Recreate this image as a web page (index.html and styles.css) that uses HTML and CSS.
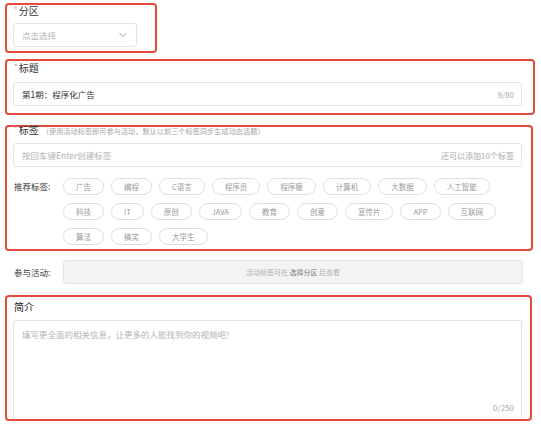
FILE: index.html
```html
<!DOCTYPE html>
<html lang="zh-CN">
<head>
<meta charset="utf-8">
<title>投稿信息</title>
<link rel="stylesheet" href="styles.css">
</head>
<body>
<div class="page">
  <section class="box box-part">
    <div class="label"><span class="req">*</span>分区</div>
    <div class="select">
      <span class="ph">点击选择</span>
      <svg class="chev" width="10" height="6" viewBox="0 0 10 6"><polyline points="1.5,1 5,4.5 8.5,1" fill="none" stroke="#a8a8a8" stroke-width="1"/></svg>
    </div>
  </section>

  <section class="box box-title">
    <div class="label"><span class="req">*</span>标题</div>
    <div class="field">
      <span class="val">第1期：程序化广告</span>
      <span class="count">9/80</span>
    </div>
  </section>

  <section class="box box-tags">
    <div class="label label-tags"><span class="req">*</span>标签<span class="note">（使用活动标签即可参与活动，默认以前三个标签同步生成动态话题）</span></div>
    <div class="field">
      <span class="ph">按回车键Enter创建标签</span>
      <span class="count">还可以添加10个标签</span>
    </div>
    <div class="rec">
      <div class="rec-label">推荐标签:</div>
      <div class="chips">
        <span class="chip">广告</span>
        <span class="chip">编程</span>
        <span class="chip">C语言</span>
        <span class="chip">程序员</span>
        <span class="chip">程序猿</span>
        <span class="chip">计算机</span>
        <span class="chip">大数据</span>
        <span class="chip">人工智能</span>
        <span class="chip">科技</span>
        <span class="chip">IT</span>
        <span class="chip">原创</span>
        <span class="chip">JAVA</span>
        <span class="chip">教育</span>
        <span class="chip">创意</span>
        <span class="chip">宣传片</span>
        <span class="chip">APP</span>
        <span class="chip">互联网</span>
        <span class="chip">算法</span>
        <span class="chip">搞笑</span>
        <span class="chip">大学生</span>
      </div>
    </div>
  </section>

  <div class="activity">
    <div class="act-label">参与活动:</div>
    <div class="act-box">活动标签可在 <span class="act-em">选择分区</span> 后查看</div>
  </div>

  <section class="box box-intro">
    <div class="label label-intro">简介</div>
    <div class="textarea">
      <span class="ph">填写更全面的相关信息，让更多的人能找到你的视频吧！</span>
      <span class="count">0/250</span>
    </div>
  </section>
</div>
</body>
</html>
```

FILE: styles.css
```css
* { box-sizing: border-box; }

body {
  margin: 0;
  background: #ffffff;
  font-family: "Noto Sans CJK SC", "Noto Sans", sans-serif;
  color: #333333;
}

.page {
  padding: 3px 0 0 5px;
}

.box {
  border: 2px solid #e24b3b;
  border-radius: 4px;
  padding: 0 6px;
}

.label {
  font-size: 10px;
  line-height: 12px;
  padding-left: 1px;
  color: #333333;
  white-space: nowrap;
}

.req {
  color: #ee7b76;
  font-size: 8px;
  vertical-align: top;
  line-height: 10px;
  margin-right: 1px;
}

.ph { color: #b3b3b3; }
.val { color: #333333; }
.count { color: #a8a8a8; }

/* 分区 */
.box-part {
  width: 152px;
  height: 50px;
}

.select {
  margin-top: 6px;
  width: 124px;
  height: 24px;
  border: 1px solid #e4e4e4;
  border-radius: 3px;
  padding: 0 8px;
  display: flex;
  align-items: center;
  justify-content: space-between;
  font-size: 8.5px;
}

.chev { display: block; }

/* 标题 */
.box-title {
  margin-top: 6px;
  width: 530px;
  height: 56px;
  padding-top: 1px;
}

.field {
  margin-top: 8px;
  width: 509px;
  height: 24px;
  border: 1px solid #e4e4e4;
  border-radius: 3px;
  padding: 0 7px 0 8px;
  display: flex;
  align-items: center;
  justify-content: space-between;
  font-size: 8.5px;
}

.field .count { font-size: 8px; }

/* 标签 */
.box-tags {
  margin-top: 10px;
  width: 528px;
  height: 126px;
}

.label-tags {
  margin-top: -3px;
}

.note {
  font-size: 7.2px;
  color: #a6a6a6;
  margin-left: 3px;
}

.box-tags .field { margin-top: 6px; }

.rec {
  margin-top: 11px;
  display: flex;
  align-items: flex-start;
}

.rec-label {
  width: 50px;
  flex: none;
  padding-left: 1px;
  font-size: 8.5px;
  line-height: 17px;
  color: #333333;
}

.chips {
  width: 450px;
  display: flex;
  flex-wrap: wrap;
  gap: 8px 7px;
}

.chip {
  height: 17px;
  padding: 0 12px;
  border: 1px solid #dedede;
  border-radius: 9px;
  font-size: 7.5px;
  line-height: 15px;
  color: #999999;
  white-space: nowrap;
}

/* 参与活动 */
.activity {
  margin-top: 9px;
  padding-left: 9px;
  display: flex;
  align-items: center;
}

.act-label {
  width: 49px;
  flex: none;
  font-size: 8.5px;
  color: #333333;
}

.act-box {
  width: 460px;
  height: 24px;
  background: #f3f3f3;
  border: 1px solid #e6e6e6;
  border-radius: 3px;
  display: flex;
  align-items: center;
  justify-content: center;
  font-size: 7px;
  color: #b0b0b0;
  white-space: pre;
}

.act-em { color: #7a7a7a; }

/* 简介 */
.box-intro {
  margin-top: 11px;
  width: 527px;
  height: 126px;
}

.label-intro {
  font-size: 10px;
  line-height: 20px;
  color: #222222;
}

.textarea {
  margin-top: 3px;
  width: 509px;
  height: 99px;
  border: 1px solid #e4e4e4;
  border-bottom: none;
  border-radius: 3px 3px 0 0;
  padding: 8px 7px 6px 8px;
  display: flex;
  flex-direction: column;
  font-size: 8.5px;
  line-height: 10px;
}

.textarea .count {
  margin-top: auto;
  align-self: flex-end;
  font-size: 8px;
}
```
